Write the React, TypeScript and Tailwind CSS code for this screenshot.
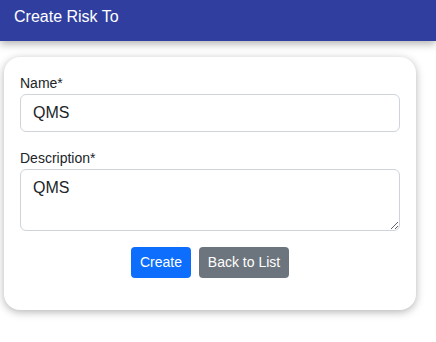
export default function App() {
  return (
    <div className="min-h-[342px] bg-white font-['Liberation_Sans',Arial,sans-serif] text-[#212529]">
      <div className="h-[41px] bg-[#303f9f] px-[14px] pt-[7px] text-[16px] leading-[20px] text-white shadow-[0_3px_8px_rgba(0,0,0,0.3)]">
        Create Risk To
      </div>
      <div className="ml-1 mt-4 w-[412px] rounded-2xl bg-white p-4 pb-4 shadow-[0_2px_8px_rgba(0,0,0,0.3)]">
        <form onSubmit={e => e.preventDefault()}>
          <div className="mb-4">
            <label className="block text-[14px] leading-[21px]">Name*</label>
            <input
              type="text"
              defaultValue="QMS"
              className="block h-[38px] w-full rounded-md border border-[#ced4da] px-3 text-[16px] text-[#212529] outline-none"
            />
          </div>
          <div className="mb-4">
            <label className="block text-[14px] leading-[21px]">Description*</label>
            <textarea
              defaultValue="QMS"
              className="block h-[62px] w-full rounded-md border border-[#ced4da] px-3 py-[6px] text-[16px] leading-[24px] text-[#212529] outline-none"
            />
          </div>
          <div className="mb-4 flex justify-center gap-2">
            <button type="submit" className="h-[31px] w-[60px] rounded-[4px] bg-[#0d6efd] text-[14px] text-white">
              Create
            </button>
            <button type="button" className="h-[31px] w-[90px] rounded-[4px] bg-[#6c757d] text-[14px] text-white">
              Back to List
            </button>
          </div>
        </form>
      </div>
    </div>
  );
}
